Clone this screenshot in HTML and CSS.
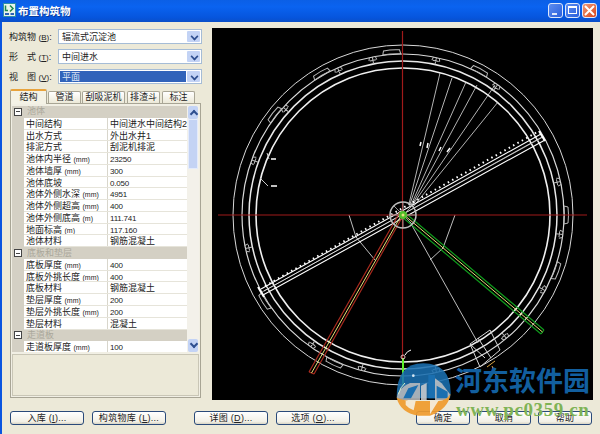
FILE: index.html
```html
<!doctype html>
<html lang="zh-CN">
  <head>
    <meta charset="UTF-8" />
    <meta name="viewport" content="width=device-width, initial-scale=1.0" />
    <title>布置构筑物</title>
    <link rel="stylesheet" href="styles.css">
  </head>

  <body>
    <div class="window">
      <div class="titlebar">
        <svg class="app-icon" width="13" height="14" viewBox="0 0 13 14">
          <rect x="0.5" y="0.5" width="12" height="13" fill="#e8f4ea" stroke="#2f8fa8" />
          <path d="M2.500 2.500v5h2.500M7 2.500l3 3-3 3" fill="none" stroke="#1f8a4c" stroke-width="1.500" />
          <path d="M2 11h4M7.500 11h3.500" stroke="#2a62b8" stroke-width="2" />
        </svg>
        <span class="title">布置构筑物</span>
        <div class="win-btns">
          <div class="win-btn"><span class="min-mark"></span></div>
          <div class="win-btn"><span class="max-mark"></span></div>
          <div class="win-btn close">
            <svg width="11" height="11" viewBox="0 0 11 11"><path d="M1 1l9 9M10 1l-9 9" stroke="#fff" stroke-width="2" /></svg>
          </div>
        </div>
      </div>

      <div class="client">
        <div class="main">
          <div class="left">
            <div class="field">
              <label>构筑物 <span class="key">(<u>B</u>)</span>:</label>
              <div class="combo"><span class="combo-text">辐流式沉淀池</span><span class="arrow"></span></div>
            </div>
            <div class="field">
              <label class="spread"><i>形</i><i>式 <span class="key">(<u>T</u>)</span>:</i></label>
              <div class="combo"><span class="combo-text">中间进水</span><span class="arrow"></span></div>
            </div>
            <div class="field">
              <label class="spread"><i>视</i><i>图 <span class="key">(<u>V</u>)</span>:</i></label>
              <div class="combo"><span class="combo-text picked">平面</span><span class="arrow"></span></div>
            </div>

            <div class="tabs">
              <div class="tab active">结构</div>
              <div class="tab">管道</div>
              <div class="tab">刮吸泥机</div>
              <div class="tab">排渣斗</div>
              <div class="tab">标注</div>
            </div>

            <div class="tab-panel">
              <div class="grid-box">
                <div class="grid">
                  <div class="group"><span class="toggle"></span>池体</div>
                  <div class="row"><span>中间结构</span><span>中间进水中间结构2</span></div>
                  <div class="row"><span>出水方式</span><span>外出水井1</span></div>
                  <div class="row"><span>排泥方式</span><span>刮泥机排泥</span></div>
                  <div class="row"><span>池体内半径 <b>(mm)</b></span><span class="num">23250</span></div>
                  <div class="row"><span>池体墙厚 <b>(mm)</b></span><span class="num">300</span></div>
                  <div class="row"><span>池体底坡</span><span class="num">0.050</span></div>
                  <div class="row"><span>池体外侧水深 <b>(mm)</b></span><span class="num">4951</span></div>
                  <div class="row"><span>池体外侧超高 <b>(mm)</b></span><span class="num">400</span></div>
                  <div class="row"><span>池体外侧底高 <b>(m)</b></span><span class="num">111.741</span></div>
                  <div class="row"><span>地面标高 <b>(m)</b></span><span class="num">117.160</span></div>
                  <div class="row"><span>池体材料</span><span>钢筋混凝土</span></div>
                  <div class="group"><span class="toggle"></span>底板和垫层</div>
                  <div class="row"><span>底板厚度 <b>(mm)</b></span><span class="num">400</span></div>
                  <div class="row"><span>底板外挑长度 <b>(mm)</b></span><span class="num">400</span></div>
                  <div class="row"><span>底板材料</span><span>钢筋混凝土</span></div>
                  <div class="row"><span>垫层厚度 <b>(mm)</b></span><span class="num">200</span></div>
                  <div class="row"><span>垫层外挑长度 <b>(mm)</b></span><span class="num">200</span></div>
                  <div class="row"><span>垫层材料</span><span>混凝土</span></div>
                  <div class="group"><span class="toggle"></span>走道板</div>
                  <div class="row"><span>走道板厚度 <b>(mm)</b></span><span class="num">100</span></div>
                </div>
                <div class="scrollbar">
                  <div class="sb-btn up"></div>
                  <div class="sb-thumb"></div>
                  <div class="sb-btn down"></div>
                </div>
              </div>
              <div class="desc"></div>
            </div>
          </div>

          <div class="canvas">
            <svg width="381" height="372" viewBox="212 28 381 372">
              <defs>
                <g id="notch">
                  <path d="M403 54v7M400 57.500h6M400 54l-1 3.500M406 54l1 3.500" />
                </g>
                <g id="tab">
                  <path d="M395 50q8 -1 16 0l1 4q-9 -1 -18 0z" />
                </g>
              </defs>

              <!-- rings -->
              <g fill="none" stroke="#d8d8d8">
                <circle cx="403" cy="215" r="170" stroke-width="1" />
                <circle cx="403" cy="215" r="161" stroke-width="1.200" />
                <circle cx="403" cy="215" r="154" stroke-width="1.500" stroke="#e8e8e8" />
                <circle cx="403" cy="215" r="147" stroke-width="1.600" stroke="#f0f0f0" />
              </g>

              <!-- brackets on the walkway -->
              <g fill="none" stroke="#bbb">
                <use href="#notch" transform="rotate(-70 403 215)" />
                <use href="#notch" transform="rotate(-48 403 215)" />
                <use href="#notch" transform="rotate(-24 403 215)" />
                <use href="#notch" transform="rotate(-11 403 215)" />
                <use href="#notch" transform="rotate(12 403 215)" />
                <use href="#notch" transform="rotate(36 403 215)" />
                <use href="#notch" transform="rotate(78 403 215)" />
                <use href="#notch" transform="rotate(97 403 215)" />
                <use href="#notch" transform="rotate(118 403 215)" />
                <use href="#notch" transform="rotate(140 403 215)" />
                <use href="#notch" transform="rotate(168 403 215)" />
                <use href="#notch" transform="rotate(195 403 215)" />
                <use href="#notch" transform="rotate(215 403 215)" />
                <use href="#notch" transform="rotate(258 403 215)" />
                <use href="#tab" transform="rotate(-52 403 215)" />
                <use href="#tab" transform="rotate(-30 403 215)" />
                <use href="#tab" transform="rotate(-4 403 215)" />
                <use href="#tab" transform="rotate(28 403 215)" />
                <use href="#tab" transform="rotate(90 403 215)" />
                <use href="#tab" transform="rotate(110 403 215)" />
                <use href="#tab" transform="rotate(205 403 215)" />
                <use href="#tab" transform="rotate(238 403 215)" />
              </g>

              <!-- sludge fan -->
              <g stroke="#e0e0e0" stroke-width="0.800" fill="none">
                <path d="M409 204L440 73M410 204L452 78M411 205L466 82M412 205L477 85M412 206L495 85M413 207L498 102" />
              </g>
              <g stroke="#fff" stroke-width="1.500">
                <path d="M421 142l-1 4M428 143l-1 5M441 147l-2 4M450 148l-3 4" />
                <path d="M271 159h5M271 186h6" />
              </g>
              <path d="M260 178l8 8M269 159l-2 -6" stroke="#ccc" fill="none" />

              <!-- grey leader lines -->
              <g fill="none" stroke="#bdbdbd">
                <path d="M349 215L356 237L375 260" />
                <path d="M455 215L443 248L430 260" />
                <path d="M410 222L478 343" />
              </g>

              <!-- chamber at bottom right -->
              <g fill="none" stroke="#d8d8d8">
                <path d="M470 344L490 330L500 350L480 367ZM478 338L491 358M485 358L470 344" />
              </g>
              <path d="M487 367l8 -6M492 366l5 11" stroke="#d9a441" fill="none" />

              <!-- white scraper arm -->
              <g stroke="#fff" fill="none">
                <path d="M262 292L543 137" stroke-width="1" stroke="#999" />
                <path d="M263 295L545 140M261 289L541 134" stroke-width="1.100" />
                <path d="M265 286L539 131" stroke-width="2" stroke-dasharray="1.500 3.500" />
                <path d="M264 291L542 137" stroke-width="0.700" />
              </g>
              <path d="M258 287l6 10M539 131l6 10" stroke="#fff" stroke-width="2" />

              <!-- inflow pipes -->
              <g fill="none">
                <path d="M400 212L309 372M404 214L314 374M309 372l5 2" stroke="#a82a1e" stroke-width="1.200" />
                <path d="M402 214L311.500 373" stroke="#e6e07a" />
                <path d="M404 212L544 330M401 216L541 334M544 330l-3 4" stroke="#0f9a1c" stroke-width="1.200" />
                <path d="M403 214L542.500 332" stroke="#e6e07a" />
              </g>

              <!-- cross axis -->
              <path d="M218 215H587M402.500 31V358" stroke="#a01a1a" stroke-width="1.200" />

              <!-- hub -->
              <g fill="none" stroke="#bdbdbd">
                <circle cx="403" cy="215" r="13" stroke-width="1.500" />
                <path d="M403 202v26M390 215h26M394 206l18 18M394 224l18 -18" stroke-width="0.800" />
              </g>
              <circle cx="403" cy="215" r="4" fill="#4fbf2a" />
              <circle cx="403" cy="215" r="1.500" fill="#e6e07a" />

              <!-- bottom riser -->
              <path d="M403 358V385" stroke="#5cf028" stroke-width="2" />
              <circle cx="403" cy="357" r="2" fill="none" stroke="#e8c0c0" />
              <path d="M405 355q2 -4 6 -5" fill="none" stroke="#fff" />
            </svg>
          </div>
        </div>

        <div class="buttons">
          <div class="btn-group">
            <div class="btn">入库 (<u>I</u>)...</div>
            <div class="btn">构筑物库 (<u>L</u>)...</div>
          </div>
          <div class="btn-group">
            <div class="btn">详图 (<u>D</u>)...</div>
            <div class="btn">选项 (<u>O</u>)...</div>
          </div>
          <div class="btn-group small">
            <div class="btn">确定</div>
            <div class="btn">取消</div>
            <div class="btn">帮助</div>
          </div>
        </div>
      </div>

      <!-- site watermark -->
      <svg class="wm-logo" width="80" height="79" viewBox="0 0 240 237">
        <path d="M35 125Q35 25 115 25Q197 25 197 115L195 130H40Z" fill="#1a6fb0" opacity="0.88" />
        <path d="M35 128Q38 100 75 84L105 84V135H40Z" fill="#bdbdbd" opacity="0.85" />
        <path d="M108 92L125 84V135H108Z" fill="#d0d0d0" opacity="0.85" />
        <path d="M150 70L170 85L195 118L190 135H150Z" fill="#c4c4c4" opacity="0.85" />
        <path d="M55 130L70 100L100 90L78 130ZM130 60H150V130H130ZM155 92L188 110V130H155Z" fill="#1a6fb0" />
        <path d="M35 128Q45 172 100 182L135 182Q190 162 197 116Q185 136 160 138L70 138Q48 134 35 128Z" fill="#ef9a2c" opacity="0.92" />
        <path d="M62 138H92L86 166Q70 160 62 150ZM135 138H160L135 178Z" fill="#f4efe2" opacity="0.9" />
        <path d="M40 118Q46 96 60 84" fill="none" stroke="#d6f0d0" stroke-width="3" />
        <circle cx="85" cy="62" r="4" fill="#d8e8f4" />
      </svg>
      <div class="wm-name">河东软件园</div>
      <div class="wm-url">www.pc0359.cn</div>
    </div>
  </body>
</html>
```

FILE: styles.css
```css
* {
  box-sizing: border-box;
  font-family: "Liberation Sans", "Noto Sans CJK SC", sans-serif;
}

html,
body {
  margin: 0;
  height: 100%;
}

.window {
  position: relative;
  width: 600px;
  height: 434px;
  overflow: hidden;
  background-color: #0a55e0;
  display: flex;
  flex-direction: column;
}

/* title bar */
.titlebar {
  height: 22px;
  flex: none;
  display: flex;
  align-items: center;
  padding: 0 3px 2px 3px;
  background: linear-gradient(#0b5fe6, #0a63f0 30%, #0655dd 80%, #0a4fc8);
}

.app-icon {
  flex: none;
}

.title {
  margin-left: 2px;
  font-size: 10.500px;
  font-weight: 700;
  color: #fff;
  text-shadow: 1px 1px 0 #0a3a9a;
}

.win-btns {
  margin-left: auto;
  display: flex;
  gap: 2px;
}

.win-btn {
  width: 15px;
  height: 15px;
  border: 1px solid #dfe8fb;
  border-radius: 3px;
  background: linear-gradient(135deg, #5d8df0, #2a5fdc);
  display: flex;
  align-items: center;
  justify-content: center;
  position: relative;
}

.win-btn.close {
  background: linear-gradient(135deg, #ee9a78, #d8451c);
}

.min-mark {
  width: 5px;
  height: 2px;
  background-color: #dfe8fb;
  position: absolute;
  left: 3px;
  bottom: 2px;
}

.max-mark {
  width: 9px;
  height: 8px;
  border: 1px solid #fff;
  border-top-width: 2px;
}

/* client area */
.client {
  flex: 1;
  margin-left: 2px;
  background-color: #ece9d8;
  display: flex;
  flex-direction: column;
}

.main {
  display: flex;
  padding-top: 6px;
  gap: 10px;
}

.left {
  width: 200px;
  flex: none;
  padding-left: 7px;
  padding-top: 1px;
}

.field {
  display: flex;
  align-items: center;
  height: 15px;
  margin-bottom: 5px;
}

.field label {
  width: 49px;
  flex: none;
  font-size: 9px;
  color: #222;
  white-space: nowrap;
}

.spread {
  display: flex;
  gap: 9px;
}

.spread i {
  font-style: normal;
}

.key {
  font-size: 8px;
}

.combo {
  width: 145px;
  height: 15px;
  background-color: #fff;
  border: 1px solid #a5bcd6;
  display: flex;
  align-items: center;
  padding: 1px;
}

.combo-text {
  flex: 1;
  height: 100%;
  font-size: 9px;
  line-height: 12px;
  padding-left: 2px;
  color: #222;
}

.combo-text.picked {
  background-color: #3163ba;
  color: #dfe6f5;
}

.arrow {
  width: 13px;
  height: 11px;
  margin-left: 1px;
  border-radius: 1px;
  background: #c3d3f5;
  position: relative;
}

.arrow::after {
  content: "";
  position: absolute;
  left: 4px;
  top: 2px;
  width: 5px;
  height: 5px;
  border-right: 2px solid #2f4f8f;
  border-bottom: 2px solid #2f4f8f;
  transform: scale(0.8) rotate(45deg);
}

/* tabs */
.tabs {
  display: flex;
  align-items: flex-end;
  height: 14px;
  margin-top: 1px;
  margin-left: 1px;
  gap: 1px;
  position: relative;
}

.tab {
  height: 12px;
  flex: none;
  font-size: 9px;
  line-height: 11px;
  text-align: center;
  white-space: nowrap;
  color: #222;
  background: linear-gradient(#fff, #ece9d8);
  border: 1px solid #a8a595;
  border-bottom: 0;
  border-radius: 2px 2px 0 0;
}

.tab.active {
  width: 37px;
  height: 15px;
  line-height: 12px;
  background: #f4f2e6;
  border-top: 2px solid #e8a33d;
  margin-bottom: -1px;
  position: relative;
  z-index: 1;
}

.tab:nth-child(2) {
  width: 33px;
}

.tab:nth-child(3) {
  width: 43px;
}

.tab:nth-child(4) {
  width: 33px;
  margin-left: 1px;
}

.tab:nth-child(5) {
  width: 33px;
  margin-left: 1px;
}

.tab-panel {
  width: 191px;
  height: 295px;
  margin-left: 1px;
  padding: 2px 1px;
  background-color: #f1efe4;
  border: 1px solid #a8a595;
}

.grid-box {
  display: flex;
  height: 246px;
  background-color: #fff;
  overflow: hidden;
}

.grid {
  width: 175px;
  flex: none;
  background: linear-gradient(90deg, #d4d0c4 12px, #fff 12px);
}

.group {
  height: 11.770px;
  background-color: #d4d0c4;
  font-size: 9px;
  line-height: 11px;
  color: #aaa79a;
  padding-left: 2px;
  display: flex;
  align-items: center;
}

.toggle {
  width: 8px;
  height: 8px;
  border: 1px solid #444;
  background: linear-gradient(#444, #444) center / 4px 1px no-repeat #fff;
  margin-right: 5px;
  flex: none;
}

.row {
  height: 11.770px;
  margin-left: 12px;
  display: grid;
  grid-template-columns: 83px 1fr;
  border-bottom: 1px solid #e6e4da;
  font-size: 9px;
  line-height: 11px;
  color: #222;
}

.row span {
  padding: 1px 0 0 2px;
  white-space: nowrap;
  overflow: hidden;
}

.row span + span {
  border-left: 1px solid #d8d6cc;
}

.row b {
  font-size: 7px;
  font-weight: 400;
}

.row .num {
  font-size: 8px;
  letter-spacing: -0.200px;
}

.scrollbar {
  flex: 1;
  display: flex;
  flex-direction: column;
  background-color: #f3f1ea;
  padding: 0 1px;
}

.sb-btn {
  height: 13px;
  flex: none;
  background-color: #c3d3f5;
  border-radius: 2px;
  position: relative;
}

.sb-btn::after {
  content: "";
  position: absolute;
  left: 3px;
  width: 4px;
  height: 4px;
  border-left: 2px solid #2f4f8f;
  border-top: 2px solid #2f4f8f;
  top: 5px;
  transform: rotate(45deg);
}

.sb-btn.down::after {
  top: 2px;
  transform: rotate(225deg);
}

.sb-thumb {
  height: 50px;
  background-color: #c4d3f4;
  border: 1px solid #e4ebfb;
}

.sb-btn.down {
  margin-top: auto;
}

.desc {
  height: 42px;
  margin-top: 2px;
  border: 1px solid #c9c6b6;
  background-color: #ece9d8;
}

/* drawing */
.canvas {
  width: 381px;
  height: 372px;
  flex: none;
  background-color: #000;
}

.canvas svg {
  display: block;
}

/* bottom buttons */
.buttons {
  display: flex;
  padding: 11px 0 0 8px;
}

.btn-group {
  display: flex;
  gap: 8px;
  margin-right: 28px;
}

.btn-group:nth-child(2) {
  margin-right: 66px;
}

.btn-group.small {
  margin-right: 0;
  gap: 7px;
}

.btn {
  width: 74px;
  height: 14px;
  font-size: 9px;
  line-height: 12px;
  letter-spacing: 0.300px;
  text-align: center;
  color: #222;
  background: linear-gradient(#fff, #f2f0e6 80%, #d8d4c4);
  border: 1px solid #2a4a7a;
  border-radius: 3px;
}

.btn-group.small .btn {
  width: 54px;
}

/* watermark over everything */
.wm-logo {
  position: absolute;
  left: 385px;
  top: 355px;
}

.wm-name {
  position: absolute;
  left: 455px;
  top: 363px;
  font-size: 27px;
  line-height: 38px;
  font-weight: 700;
  color: #125f9f;
  white-space: nowrap;
}

.wm-url {
  position: absolute;
  left: 456px;
  top: 400px;
  font-family: "Liberation Serif", serif;
  font-size: 19px;
  line-height: 20px;
  font-weight: 700;
  letter-spacing: 0.600px;
  color: #7fb356;
  white-space: nowrap;
}
```
